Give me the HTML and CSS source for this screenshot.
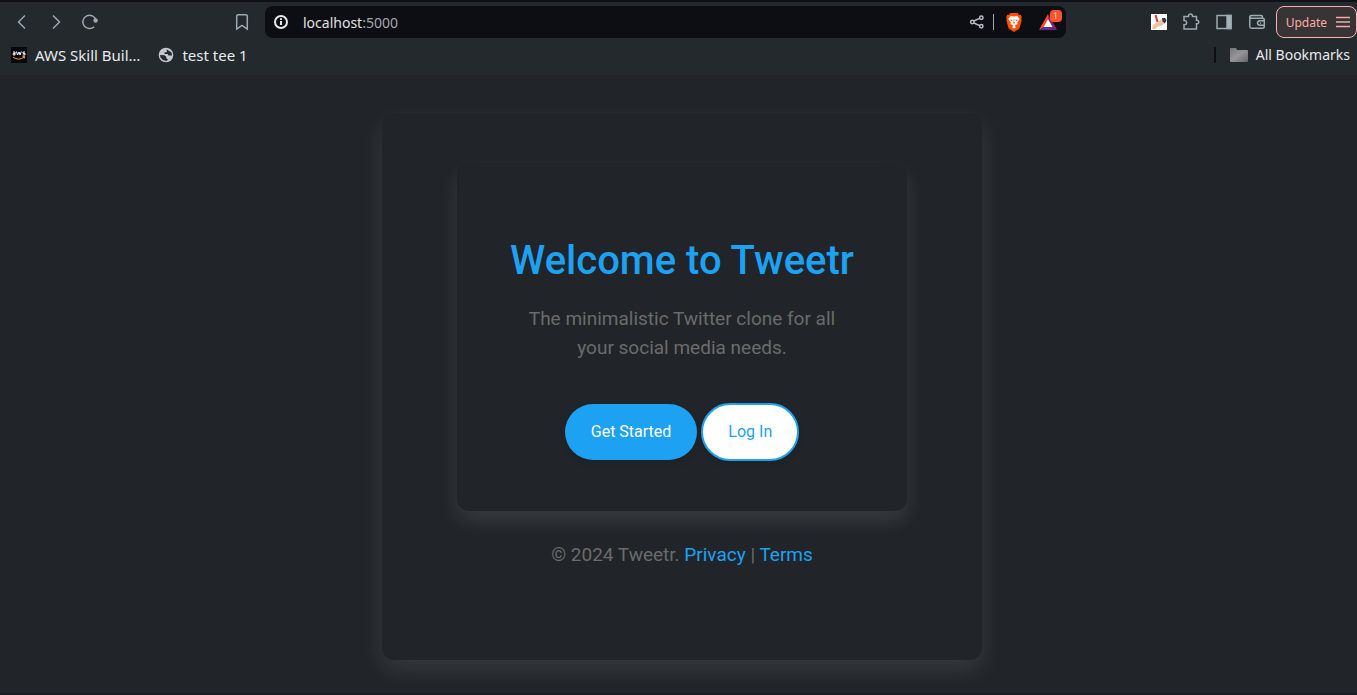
FILE: index.html
```html
<!DOCTYPE html>
<html lang="en">
<head>
<meta charset="utf-8">
<title>Tweetr</title>
<link rel="stylesheet" href="styles.css">
</head>
<body>
<header class="browser">
  <div class="toolbar">
    <div class="nav">
      <button class="icon-btn" aria-label="Back"><svg width="18" height="18" viewBox="0 0 18 18"><path d="M12 2.500L5.500 9l6.500 6.500"/></svg></button>
      <button class="icon-btn" aria-label="Forward"><svg width="18" height="18" viewBox="0 0 18 18"><path d="M6 2.500L12.500 9L6 15.500"/></svg></button>
      <button class="icon-btn" aria-label="Reload"><svg width="18" height="18" viewBox="0 0 18 18"><path d="M13.200 13.700A6.700 6.700 0 1 1 15 7.200"/><circle class="solid" cx="14.600" cy="7.500" r="1.500"/></svg></button>
    </div>
    <button class="icon-btn" aria-label="Bookmark this tab"><svg width="18" height="18" viewBox="0 0 18 18"><path d="M3.700 16V3.200Q3.700 1.700 5.200 1.700H12.800Q14.300 1.700 14.300 3.200V16L9 12.300Z"/></svg></button>
    <div class="address">
      <svg class="info" width="16" height="16" viewBox="0 0 16 16"><circle cx="8" cy="8" r="6"/><path d="M8 7v4M8 4.300v1.700"/></svg>
      <span class="url">localhost<span class="port">:5000</span></span>
      <button class="icon-btn share" aria-label="Share"><svg width="16" height="16" viewBox="0 0 16 16"><circle cx="3.300" cy="8" r="1.700"/><circle cx="12.300" cy="3.700" r="1.700"/><circle cx="12.300" cy="12.300" r="1.700"/><path d="M5 7l5.500-2.700M5 9l5.500 2.700"/></svg></button>
      <span class="rule"></span>
      <button class="icon-btn shield" aria-label="Brave Shields"><svg width="18" height="20" viewBox="0 0 18 20"><path fill="#ff5000" d="M5.500 1h7l1.700 1.900 1.600-.2 1 2.500-.6 1.600.5 1.500-2 7.200q-.5 1.300-1.800 2.100L9 20l-3.900-2.400q-1.300-.8-1.800-2.100l-2-7.200.5-1.500-.6-1.600 1-2.500 1.600.2Z"/><path fill="#fff" d="M5.700 4l3.300.5 3.300-.5 2.400 2.900-2.500 3.700.5 1.500-3.200 1.700 1.500 1.400L9 16.500l-2-1.300 1.500-1.400-3.200-1.700.5-1.500-2.500-3.700Z"/><path fill="#ff5000" d="M5.500 7.500l2 .4-.6 1.200-1.400-.6ZM12.500 7.500l-2 .4.600 1.200 1.400-.6ZM8.700 7h.6L9.300 10l.7 1L9 11.800l-1-.8.7-1Z"/></svg></button>
      <button class="icon-btn rewards" aria-label="Brave Rewards"><svg width="18" height="16" viewBox="0 0 18 16"><path fill="#ff4724" d="M9 0L0 16l5-3L9 5Z"/><path fill="#9e1f63" d="M9 0l9 16-5-3L9 5Z"/><path fill="#662d91" d="M0 16h18l-5-3H5Z"/><path fill="#fff" d="M9 5L4.500 13h9Z"/></svg><span class="badge">1</span></button>
    </div>
    <div class="tools">
      <button class="icon-btn" aria-label="Pen extension"><svg width="16" height="16" viewBox="0 0 16 16"><path class="plain" fill="#fff" d="M0 0h16v16H0Z"/><path class="plain" fill="#efc49b" d="M1 15l1-4 5-3 4-3 2 1 1 3-4 3-3 .5L4 15Z"/><path class="plain" fill="#27395c" d="M11 4l3 0 1.500 2-1.500 3.500-2.500-2Z"/><path class="pen" d="M4.500 1l2 7"/></svg></button>
      <button class="icon-btn" aria-label="Extensions"><svg width="18" height="18" viewBox="0 0 18 18"><path d="M2 3.500H6.500V2.800Q6.700 1 8.500 1T10.500 2.800V3.500H14.500V7.200H15.200Q16.800 7.500 16.800 9T15.200 10.800H14.500V16H2V11.800H2.700Q4.700 11.500 4.700 9.700T2.700 7.500H2Z"/></svg></button>
      <button class="icon-btn" aria-label="Sidebar"><svg width="18" height="18" viewBox="0 0 18 18"><rect x="2" y="2.500" width="14" height="13"/><path class="solid" d="M12 2.500h4v13h-4Z"/></svg></button>
      <button class="icon-btn" aria-label="Wallet"><svg width="18" height="18" viewBox="0 0 18 18"><path d="M14.500 5V4Q14.500 2.500 13 2.500H3.500Q1.800 2.500 1.800 4V13.500Q1.800 15.200 3.500 15.200H14.500Q16.300 15.200 16.300 13.500V6.700Q16.300 5.200 14.500 5.200H3.500Q1.800 5.200 1.800 4M16.300 7.700H12Q9.500 8 9.500 10T12 12.300H16.300M12 10h1"/></svg></button>
    </div>
    <button class="update">Update<svg width="14" height="12" viewBox="0 0 14 12"><path d="M0 1.500h14M0 6h14M0 10.500h14"/></svg></button>
  </div>
  <nav class="bookmarks" aria-label="Bookmarks">
    <a class="bookmark" href="#"><svg width="16" height="16" viewBox="0 0 16 16"><path fill="#06090b" d="M0 0h16v16H0Z"/><path class="mark" d="M2 5h2v3H2.200V6.500H4M5.500 4.500L6.500 8 8 5l1 3 1.300-3.500M14 5H12v1.400h2V8h-2.300"/><path class="smile" d="M2 10.300q6 3.500 11 0M11.500 9.500h2.300l-.6 2"/></svg><span>AWS Skill Buil…</span></a>
    <a class="bookmark" href="#"><svg width="16" height="16" viewBox="0 0 16 16"><circle cx="8" cy="8" r="7.300" fill="#c3c6ca"/><path fill="#23282b" d="M8.500 2.200l5 3.300.5 3H10.500L9.800 7H6.500V5.500L9 5ZM2 8l4.500.2 1.700 1.500v1.500L10 12.500 8.500 14 5 13 2.500 10.500Z"/></svg><span>test tee 1</span></a>
    <a class="bookmark all" href="#"><svg width="18" height="15" viewBox="0 0 18 15"><defs><linearGradient id="folder" x2="1" y2="1"><stop stop-color="#77777b"/><stop offset=".5" stop-color="#96969a"/><stop offset="1" stop-color="#66666a"/></linearGradient></defs><path fill="url(#folder)" d="M0 1Q0 0 1 0h5l1 2h10q1 0 1 1v10q0 1-1 1H1q-1 0-1-1Z"/></svg><span>All Bookmarks</span></a>
  </nav>
</header>
<main class="page">
  <div class="container">
    <section class="card">
      <h1>Welcome to Tweetr</h1>
      <p class="lead">The minimalistic Twitter clone for all your social media needs.</p>
      <div class="actions">
        <button class="btn primary">Get Started</button>
        <button class="btn secondary">Log In</button>
      </div>
    </section>
    <footer class="footer">© 2024 Tweetr. <a href="#">Privacy</a> | <a href="#">Terms</a></footer>
  </div>
</main>
</body>
</html>
```
FILE: styles.css
```css
* { box-sizing: border-box; }

body {
  margin: 0;
  min-height: 100vh;
  display: flex;
  flex-direction: column;
  background: #212529;
  border-bottom: 2px solid #1b1e21;
  font-family: Roboto, sans-serif;
}

button {
  border: 0;
  background: none;
  padding: 0;
  font-family: inherit;
}

a { text-decoration: none; }

.browser {
  padding-bottom: 7px;
  border-top: 2px solid #101116;
  background: #23292c;
  font-family: "Noto Sans", sans-serif;
}

.toolbar {
  display: flex;
  align-items: center;
  height: 40px;
  padding-left: 13px;
}

.nav {
  display: flex;
  gap: 16px;
  margin-right: 134px;
}

.icon-btn {
  display: flex;
  flex: none;
}

.icon-btn svg {
  fill: none;
  stroke: #9caab1;
  stroke-width: 1.5;
}

.icon-btn .solid { fill: #a5b4bb; }

.icon-btn .plain { stroke: none; }

.icon-btn .pen {
  stroke: #d63848;
  stroke-width: 2;
}

.address {
  display: flex;
  align-items: center;
  flex: 1;
  height: 32px;
  margin-left: 14px;
  padding: 0 9px 0 8px;
  border-radius: 8px;
  background: #0d0e13;
}

.info {
  fill: none;
  stroke: #e8e8ea;
  stroke-width: 2;
}

.url {
  flex: 1;
  margin-left: 14px;
  color: #e0e0e3;
  font-size: 14px;
}

.port { color: #a5a6aa; }

.address .share svg { stroke: #bbbcc1; }

.rule {
  width: 1px;
  height: 16px;
  margin: 0 11px 0 8px;
  background: #a6a7ab;
}

.address .shield svg,
.address .rewards svg { stroke: none; }

.rewards {
  position: relative;
  margin-left: 16px;
}

.badge {
  position: absolute;
  left: 11px;
  bottom: 8px;
  width: 12px;
  height: 12px;
  border-radius: 4px;
  background: #fb542b;
  color: #ffd5ca;
  font-size: 8px;
  line-height: 12px;
  text-align: center;
}

.tools {
  display: flex;
  align-items: center;
  gap: 15px;
  margin: 0 10px 0 85px;
}

.update {
  display: flex;
  align-items: center;
  gap: 9px;
  height: 32px;
  padding: 0 6px 0 9px;
  border: 1px solid #ffb0ad;
  border-radius: 8px;
  background: #373435;
  color: #ffaaa7;
  font-size: 12px;
}

.update svg {
  stroke: #f2aaa7;
  stroke-width: 1.5;
}

.bookmarks {
  display: flex;
  align-items: center;
  gap: 18px;
  height: 26px;
  padding: 0 7px 0 11px;
}

.bookmark {
  display: flex;
  align-items: center;
  gap: 8px;
  color: #e8eaed;
  font-size: 15px;
  line-height: 20px;
}

.bookmark .mark {
  fill: none;
  stroke: #fff;
}

.bookmark .smile {
  fill: none;
  stroke: #f59a23;
}

.all {
  margin-left: auto;
  padding-left: 16px;
  background: linear-gradient(#0e0f13, #0e0f13) left center / 2px 16px no-repeat;
  font-size: 14px;
}

.page {
  flex: 1;
  padding: 38px 0 33px 7px;
}

.container {
  max-width: 600px;
  margin: 0 auto;
  padding: 50px 75px 91px;
  border-radius: 12px;
  background: #212529;
  box-shadow: 0 10px 25px rgba(255, 255, 255, 0.1);
  text-align: center;
}

.card {
  padding: 50px;
  border-radius: 12px;
  background: #212529;
  box-shadow: 0 10px 20px rgba(255, 255, 255, 0.1);
}

h1 {
  margin: 24px 0 19px;
  color: #1da1f2;
  font-size: 40px;
  font-weight: 500;
  line-height: 48px;
}

.lead {
  margin: 0 0 41px;
  padding: 0 10px;
  color: #6b6b6b;
  font-size: 19px;
  line-height: 29px;
}

.actions {
  display: flex;
  align-items: center;
  justify-content: center;
  gap: 4px;
}

.btn {
  padding: 16px 26px;
  border-radius: 30px;
  font-size: 16px;
  line-height: 24px;
  box-shadow: 0 4px 6px rgba(0, 0, 0, 0.1);
}

.primary {
  background: #1da1f2;
  color: #fff;
}

.secondary {
  padding: 15px 25px;
  border: 2px solid #1da1f2;
  background: #fff;
  color: #1da1f2;
}

.footer {
  margin-top: 29px;
  color: #6b6b6b;
  font-size: 19px;
  line-height: 29px;
}

.footer a { color: #1da1f2; }
```
